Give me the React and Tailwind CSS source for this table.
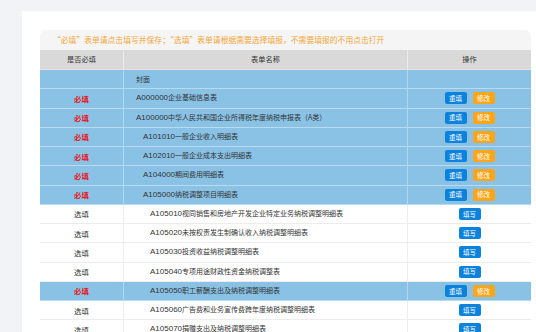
const ROWS = [
  { req: '', name: '封面', level: 0, blue: true, ops: 'none' },
  { req: '必填', name: 'A000000企业基础信息表', level: 0, blue: true, ops: 'edit' },
  { req: '必填', name: 'A100000中华人民共和国企业所得税年度纳税申报表（A类）', level: 0, blue: true, ops: 'edit' },
  { req: '必填', name: 'A101010一般企业收入明细表', level: 1, blue: true, ops: 'edit' },
  { req: '必填', name: 'A102010一般企业成本支出明细表', level: 1, blue: true, ops: 'edit' },
  { req: '必填', name: 'A104000期间费用明细表', level: 1, blue: true, ops: 'edit' },
  { req: '必填', name: 'A105000纳税调整项目明细表', level: 1, blue: true, ops: 'edit' },
  { req: '选填', name: 'A105010视同销售和房地产开发企业特定业务纳税调整明细表', level: 2, blue: false, ops: 'fill' },
  { req: '选填', name: 'A105020未按权责发生制确认收入纳税调整明细表', level: 2, blue: false, ops: 'fill' },
  { req: '选填', name: 'A105030投资收益纳税调整明细表', level: 2, blue: false, ops: 'fill' },
  { req: '选填', name: 'A105040专项用途财政性资金纳税调整表', level: 2, blue: false, ops: 'fill' },
  { req: '必填', name: 'A105050职工薪酬支出及纳税调整明细表', level: 2, blue: true, ops: 'edit' },
  { req: '选填', name: 'A105060广告费和业务宣传费跨年度纳税调整明细表', level: 2, blue: false, ops: 'fill' },
  { req: '选填', name: 'A105070捐赠支出及纳税调整明细表', level: 2, blue: false, ops: 'fill' },
];

const indent = ['pl-3', 'pl-[19px]', 'pl-[26px]'];

function Btn({ children, color }) {
  return (
    <span className={`inline-flex items-center justify-center w-[22px] h-[12px] rounded-[2px] text-white text-[6.5px] leading-none ${color}`}>
      {children}
    </span>
  );
}

function FormName({ name }) {
  const m = name.match(/^([A-Z]\d+)(.*)$/);
  if (!m) return <span>{name}</span>;
  return (
    <span>
      <span className="font-['Liberation_Sans'] text-[8px]">{m[1]}</span>
      {m[2]}
    </span>
  );
}

function Row({ row }) {
  const bg = row.blue ? 'bg-[#89c2e5] border-[#b9dbf0]' : 'bg-white border-[#ececec]';
  const line = row.blue ? 'border-[#b3d7ee]' : 'border-[#eeeeee]';
  return (
    <div className={`flex h-[19.25px] border-b ${bg}`}>
      <div className={`w-[84px] shrink-0 flex items-center justify-center border-r text-[7.4px] ${line}`}>
        {row.req === '必填' ? (
          <span className="text-[#e8141b] font-bold">必填</span>
        ) : (
          <span>{row.req}</span>
        )}
      </div>
      <div className={`w-[284px] shrink-0 flex items-center whitespace-nowrap overflow-hidden border-r ${line} ${indent[row.level]}`}>
        <FormName name={row.name} />
      </div>
      <div className="flex-1 flex items-center justify-center gap-[6px]">
        {row.ops === 'edit' && (
          <>
            <Btn color="bg-[#0d82dc]">重填</Btn>
            <Btn color="bg-[#fba51a]">修改</Btn>
          </>
        )}
        {row.ops === 'fill' && <Btn color="bg-[#0d82dc]">填写</Btn>}
      </div>
    </div>
  );
}

export default function App() {
  return (
    <div
      className="w-[536px] h-[332px] overflow-hidden bg-[#f2f3f7] pl-[22px] pt-[11px] text-[7px] text-[#333]"
      style={{ fontFamily: '"Noto Sans CJK SC", "Noto Sans", sans-serif' }}
    >
      <div className="bg-white h-[340px] pl-[18px] pt-[19px] pr-[5px]">
        <div className="rounded-t-[6px] overflow-hidden">
          <div className="h-[20px] bg-[#f5f5f5] flex items-center pl-[13px] text-[#f5a537] text-[7.8px] whitespace-nowrap">
            “必填”表单请点击填写并保存；“选填”表单请根据需要选择填报，不需要填报的不用点击打开
          </div>
          <div className="flex h-[20px] bg-[#d9d9d9] border-b border-[#e3e3e3] text-[7.2px]">
            <div className="w-[84px] shrink-0 flex items-center justify-center border-r border-[#ebebeb]">是否必填</div>
            <div className="w-[284px] shrink-0 flex items-center justify-center border-r border-[#ebebeb]">表单名称</div>
            <div className="flex-1 flex items-center justify-center">操作</div>
          </div>
          {ROWS.map((r, i) => (
            <Row key={i} row={r} />
          ))}
        </div>
      </div>
    </div>
  );
}
